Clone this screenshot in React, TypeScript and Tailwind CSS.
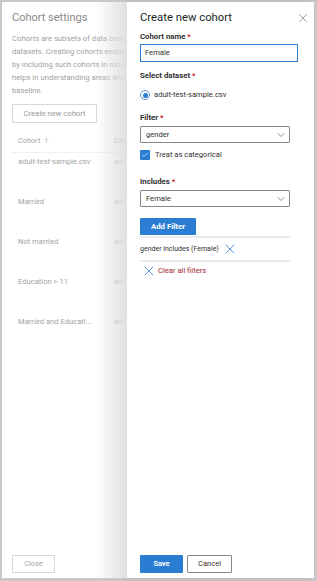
import { X, ChevronDown, Check, ArrowUp } from 'lucide-react';

const font = { fontFamily: 'Roboto, "Noto Sans", sans-serif' };

const rows = ['adult-test-sample.csv', 'Married', 'Not married', 'Education > 11', 'Married and Educati...'];

const Req = () => <span className="text-[#c4262c]"> *</span>;

const CohortSettings = () => (
  <div className="relative w-[125px] shrink-0 overflow-hidden bg-white">
    <div className="flex h-full w-[240px] flex-col pl-[10px]">
      <div className="mt-[8px] text-[11px] leading-[16px] text-[#8a8a8a]">Cohort settings</div>
      <div className="mt-[6px] whitespace-nowrap text-[7.7px] leading-[13px] text-[#a0a0a0]">
        <div>Cohorts are subsets of data created by adding filters</div>
        <div>datasets. Creating cohorts enables you to explore</div>
        <div>by including such cohorts in model comparisons</div>
        <div>helps in understanding areas where the model</div>
        <div>baseline.</div>
      </div>
      <button className="mt-[7px] h-[19px] w-[85px] border border-[#d9d9d9] text-[7.6px] text-[#9a9a9a]">
        Create new cohort
      </button>
      <div className="mt-[7px] flex h-[23px] w-[230px] items-center border-b border-[#f0f0f0] text-[7.4px] text-[#a6a6a6]">
        <div className="flex w-[102px] items-center gap-[3px] pl-[6px]">
          Cohort <ArrowUp size={7} strokeWidth={1.5} />
        </div>
        <div>Dataset</div>
      </div>
      {rows.map(r => (
        <div key={r} className="flex h-[40px] items-start whitespace-nowrap pt-[4px] text-[7.6px] leading-[10px] text-[#a3a3a3]">
          <div className="w-[102px] pl-[6px]">{r}</div>
          <div>adult-test-sample.csv</div>
        </div>
      ))}
      <div className="flex-1" />
      <button className="mb-[5px] h-[18px] w-[43px] border border-[#d9d9d9] text-[7.4px] text-[#a6a6a6]">
        Close
      </button>
    </div>
    <div className="pointer-events-none absolute inset-y-0 right-0 w-[32px] bg-gradient-to-r from-transparent to-[#e0e0e0]" />
  </div>
);

const Select = ({ value }: { value: string }) => (
  <div className="flex h-[17px] w-[150px] items-center justify-between rounded-[1px] border border-[#8a8886] pl-[5px] pr-[2px] text-[7.6px] text-[#323130]">
    {value}
    <ChevronDown size={12} strokeWidth={1.4} className="text-[#605e5c]" />
  </div>
);

const Label = ({ text, mt }: { text: string; mt: string }) => (
  <div className={`${mt} text-[7.8px] font-bold leading-[10px] text-[#323130]`}>
    {text}
    <Req />
  </div>
);

const CreateCohort = () => (
  <div className="flex flex-1 flex-col bg-white pl-[13px] pr-[16px] shadow-[-3px_0_6px_rgba(0,0,0,0.1)]">
    <div className="mt-[8px] flex h-[16px] items-center justify-between">
      <div className="text-[11.3px] leading-[16px] text-[#201f1e]">Create new cohort</div>
      <X size={14} strokeWidth={1.4} className="-mr-[12px] text-[#8a8886]" />
    </div>
    <Label text="Cohort name" mt="mt-[6px]" />
    <div className="mt-[2px] flex h-[18px] items-center border-[1.5px] border-[#2b7cd3] pl-[4px] text-[7.6px] text-[#323130]">
      Female
    </div>
    <Label text="Select dataset" mt="mt-[9px]" />
    <div className="mt-[9px] flex h-[10px] items-center gap-[4px] text-[7.6px] text-[#323130]">
      <div className="flex h-[10px] w-[10px] items-center justify-center rounded-full border border-[#5b8fd0]">
        <div className="h-[5px] w-[5px] rounded-full bg-[#2b7cd3]" />
      </div>
      adult-test-sample.csv
    </div>
    <Label text="Filter" mt="mt-[13px]" />
    <div className="mt-[3px]">
      <Select value="gender" />
    </div>
    <div className="mt-[6px] flex h-[11px] items-center gap-[5px] text-[7.6px] text-[#323130]">
      <div className="flex h-[10px] w-[10px] items-center justify-center rounded-[1px] bg-[#2b7cd3]">
        <Check size={8} strokeWidth={2} className="text-white" />
      </div>
      Treat as categorical
    </div>
    <Label text="Includes" mt="mt-[17px]" />
    <div className="mt-[3px]">
      <Select value="Female" />
    </div>
    <button className="mt-[11px] h-[17px] w-[56px] rounded-[1px] bg-[#2b7cd3] text-[7.8px] font-bold text-white">
      Add Filter
    </button>
    <div className="mt-[1px] w-[150px] border-t-2 border-[#ebebeb]" />
    <div className="flex h-[22px] w-[150px] items-center gap-[3px] text-[7px] text-[#323130]">
      gender includes (Female)
      <X size={16} strokeWidth={1.4} className="text-[#4a8fdc]" />
    </div>
    <div className="w-[150px] border-t-2 border-[#ebebeb]" />
    <div className="mt-[3px] flex h-[12px] items-center gap-[1px] pl-[1px] text-[7.6px] text-[#a4262c]">
      <X size={16} strokeWidth={1.4} className="text-[#4a8fdc]" />
      Clear all filters
    </div>
    <div className="flex-1" />
    <div className="mb-[5px] flex gap-[4px]">
      <button className="h-[18px] w-[43px] rounded-[1px] bg-[#2b7cd3] text-[7.4px] font-bold text-white">Save</button>
      <button className="h-[18px] w-[45px] rounded-[1px] border border-[#8a8886] text-[7.6px] text-[#323130]">Cancel</button>
    </div>
  </div>
);

export default function App() {
  return (
    <div className="flex h-[581px] w-[317px] border-2 border-r-[3px] border-b-[3px] border-[#c8c8c8] bg-white" style={font}>
      <CohortSettings />
      <CreateCohort />
    </div>
  );
}
